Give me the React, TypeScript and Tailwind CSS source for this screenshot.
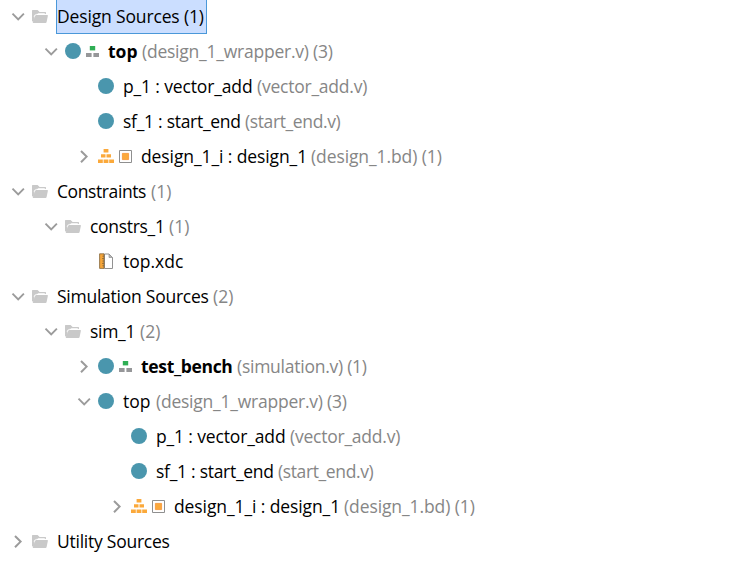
import type { ReactNode } from "react";

const ChevronDown = () => (
  <svg className="mb-px h-4 w-4 shrink-0" viewBox="0 0 16 16" fill="none">
    <path d="M2.5 5.6L8.2 11.3L13.9 5.6" stroke="#9b9b9b" strokeWidth="1.9" />
  </svg>
);

const ChevronRight = () => (
  <svg className="mb-px h-4 w-4 shrink-0" viewBox="0 0 16 16" fill="none">
    <path d="M5 3L10.6 8.6L5 14.2" stroke="#9b9b9b" strokeWidth="2" />
  </svg>
);

const Folder = () => (
  <svg className="mb-px h-4 w-4 shrink-0" viewBox="0 0 16 16" fill="#c9c9c9">
    <path d="M0 13.6V2.6Q0 2 .6 2H5.6L7.6 4H13.4Q14 4 14 4.6V6H12.8V5.2H6.4L4.6 6.5L2.5 8V13Z" />
    <path d="M4.2 7H15.4Q16.1 7 15.9 7.8L14.6 14.1Q14.4 15 13.6 15H1.4Q.5 15 .8 14.2L3.2 7.8Q3.5 7 4.2 7Z" />
    <path d="M2.1 8.8Q2.5 6.4 4.2 6.4H14.3" fill="none" stroke="white" strokeWidth=".7" />
  </svg>
);

const Module = () => (
  <svg className="mb-px h-4 w-4 shrink-0" viewBox="0 0 16 16">
    <circle cx="8" cy="8" r="8" fill="#4a96ad" />
  </svg>
);

const Hierarchy = () => (
  <svg className="mb-px h-4 w-[13px] shrink-0" viewBox="0 0 13 16">
    <path d="M3.8 3H9.2V7.4H3.8Z" fill="#2fae54" />
    <path d="M0 10H5.6V14H0ZM7.4 10H13V14H7.4Z" fill="#969799" />
  </svg>
);

const Pyramid = () => (
  <svg className="mb-px h-4 w-4 shrink-0" viewBox="0 0 16 16" fill="#fba93b">
    <path d="M5.6 1H10.4V4.4H5.6ZM3 6.2H7.5V9.6H3ZM8.5 6.2H13V9.6H8.5ZM0 11.4H4.8V15H0ZM5.6 11.4H10.4V15H5.6ZM11.2 11.4H16V15H11.2Z" />
  </svg>
);

const Block = () => (
  <svg className="mb-px h-4 w-[13px] shrink-0" viewBox="0 0 13 16">
    <path d="M.5 2.5H12.5V14.5H.5Z" fill="white" stroke="#8f8f8f" />
    <path d="M3.4 5.4H9.6V11.6H3.4Z" fill="#fba93b" stroke="#f79333" strokeWidth=".8" />
  </svg>
);

const ConstraintFile = () => (
  <svg className="mb-px h-4 w-4 shrink-0" viewBox="0 0 16 16">
    <path d="M6.5 1H11L14.5 4.5V15.5H6.5Z" fill="white" stroke="#929292" />
    <path d="M11 1V4.5H14.5Z" fill="#b8b8b8" stroke="#929292" strokeWidth=".7" />
    <path d="M1.6 .8H6V15.4H1.6Z" fill="#f6a63a" stroke="#826337" strokeWidth=".8" />
    <path d="M4.4 3.2H6M4 5.6H6M4.4 8H6M4 10.4H6M4.4 12.8H6" stroke="#826337" strokeWidth=".8" />
  </svg>
);

type RowProps = {
  indent: string;
  arrow?: "down" | "right";
  icons: ReactNode;
  label: string;
  labelClass: string;
  note?: string;
  noteClass?: string;
  selected?: boolean;
};

function Row({ indent, arrow, icons, label, labelClass, note, noteClass = "", selected }: RowProps) {
  return (
    <div className={`flex h-[35px] items-center whitespace-pre ${indent}`}>
      <div className="mr-1.5 flex w-4 shrink-0">
        {arrow === "down" && <ChevronDown />}
        {arrow === "right" && <ChevronRight />}
      </div>
      <div className="mr-[9px] flex gap-[5px]">{icons}</div>
      {selected ? (
        <div className="-ml-px flex h-[35px] w-[151px] items-center border border-[#4a98d9] bg-[#cbdeff]">
          <span className={`mb-0.5 ${labelClass}`}>{label}</span>
        </div>
      ) : (
        <span className={`mb-0.5 shrink-0 ${labelClass}`}>{label}</span>
      )}
      {note && <span className={`mb-0.5 text-[#868686] ${noteClass}`}>{note}</span>}
    </div>
  );
}

const L0 = "pl-[10px]";
const L1 = "pl-[43px]";
const L2 = "pl-[76px]";
const L3 = "pl-[109px]";

const VECTOR = {
  label: "p_1 : vector_add",
  labelClass: "w-[134px] tracking-[-0.14px]",
  note: "(vector_add.v)",
  noteClass: "tracking-[-0.23px]",
};
const START_END = {
  label: "sf_1 : start_end",
  labelClass: "w-[122px] tracking-[-0.28px]",
  note: "(start_end.v)",
  noteClass: "tracking-[-0.38px]",
};
const DESIGN = {
  label: "design_1_i : design_1",
  labelClass: "w-[170px] tracking-[-0.1px]",
  note: "(design_1.bd) (1)",
  noteClass: "tracking-[-0.1px]",
};
const WRAPPER = {
  note: "(design_1_wrapper.v) (3)",
  noteClass: "tracking-[-0.23px]",
};

export default function App() {
  return (
    <div className="h-[566px] w-[734px] overflow-hidden bg-white font-['Open_Sans','Noto_Sans',sans-serif] text-[17.5px] leading-6 text-black">
      <div className="-mt-px flex flex-col">
        <Row indent={L0} arrow="down" icons={<Folder />} label="Design Sources (1)" labelClass="tracking-[-0.15px]" selected />
        <Row indent={L1} arrow="down" icons={<><Module /><Hierarchy /></>} label="top" labelClass="w-[34px] font-bold" {...WRAPPER} />
        <Row indent={L2} icons={<Module />} {...VECTOR} />
        <Row indent={L2} icons={<Module />} {...START_END} />
        <Row indent={L2} arrow="right" icons={<><Pyramid /><Block /></>} {...DESIGN} />
        <Row indent={L0} arrow="down" icons={<Folder />} label="Constraints" labelClass="w-[94px] tracking-[-0.4px]" note="(1)" />
        <Row indent={L1} arrow="down" icons={<Folder />} label="constrs_1" labelClass="w-[79px] tracking-[-0.3px]" note="(1)" />
        <Row indent={L2} icons={<ConstraintFile />} label="top.xdc" labelClass="" />
        <Row indent={L0} arrow="down" icons={<Folder />} label="Simulation Sources" labelClass="w-[156px] tracking-[-0.25px]" note="(2)" />
        <Row indent={L1} arrow="down" icons={<Folder />} label="sim_1" labelClass="w-[50px] tracking-[-0.3px]" note="(2)" />
        <Row indent={L2} arrow="right" icons={<><Module /><Hierarchy /></>} label="test_bench" labelClass="w-[96px] font-bold tracking-[-0.33px]" note="(simulation.v) (1)" noteClass="tracking-[-0.25px]" />
        <Row indent={L2} arrow="down" icons={<Module />} label="top" labelClass="w-[33px]" {...WRAPPER} />
        <Row indent={L3} icons={<Module />} {...VECTOR} />
        <Row indent={L3} icons={<Module />} {...START_END} />
        <Row indent={L3} arrow="right" icons={<><Pyramid /><Block /></>} {...DESIGN} />
        <Row indent={L0} arrow="right" icons={<Folder />} label="Utility Sources" labelClass="tracking-[-0.25px]" />
      </div>
    </div>
  );
}
